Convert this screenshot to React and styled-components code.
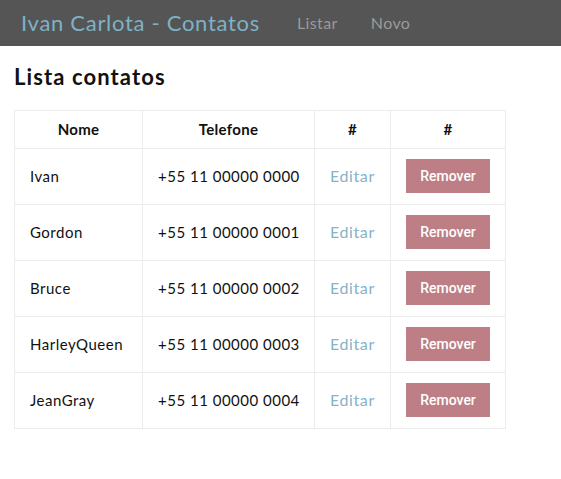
import React from "react";
import styled, { createGlobalStyle } from "styled-components";

const Global = createGlobalStyle`
  html, body { margin: 0; padding: 0; background: #fff; }
  body { font-family: "Lato", "Open Sans", sans-serif; color: #111; }
`;

const NavBar = styled.header`
  height: 46px;
  background: #555555;
  display: flex;
  align-items: center;
  padding: 0 0 2px 21px;
  box-sizing: border-box;
  gap: 37px;
`;

const Brand = styled.span`
  font-size: 22px;
  color: #7db2c6;
  letter-spacing: 0.7px;
`;

const NavLinks = styled.nav`
  display: flex;
  gap: 33px;
`;

const NavLink = styled.a`
  font-size: 16px;
  color: #9a9a9a;
  text-decoration: none;
  letter-spacing: 0.4px;
`;

const Main = styled.main`
  padding: 0 14px;
`;

const Title = styled.h1`
  font-size: 22px;
  font-weight: 700;
  margin: 18px 0 20px;
  line-height: 26px;
  letter-spacing: 1.1px;
  color: #111;
`;

const Table = styled.table`
  border-collapse: collapse;
  table-layout: fixed;
  width: 491px;
  font-size: 15px;
`;

const Th = styled.th`
  border: 1px solid #ececec;
  height: 35px;
  padding: 0 16px 2px;
  font-weight: 700;
  text-align: center;
  color: #111;
  font-size: 15px;
  letter-spacing: 0.3px;
`;

const Td = styled.td`
  border: 1px solid #ececec;
  height: 53px;
  padding: 0 15px 2px;
  color: #111;
  white-space: nowrap;
  letter-spacing: 0.5px;
`;

const EditLink = styled.a`
  color: #86b3c8;
  font-size: 16px;
  letter-spacing: 0.6px;
  text-decoration: none;
`;

const RemoveButton = styled.button`
  display: block;
  width: 84px;
  height: 34px;
  border: none;
  background: #bd7e85;
  color: #fff;
  font-family: "Roboto", "Liberation Sans", sans-serif;
  font-weight: 500;
  font-size: 14px;
  letter-spacing: 0;
  padding: 0;
  cursor: pointer;
`;

const contacts = [
  { name: "Ivan", phone: "+55 11 00000 0000" },
  { name: "Gordon", phone: "+55 11 00000 0001" },
  { name: "Bruce", phone: "+55 11 00000 0002" },
  { name: "HarleyQueen", phone: "+55 11 00000 0003" },
  { name: "JeanGray", phone: "+55 11 00000 0004" },
];

export default function App() {
  return (
    <>
      <Global />
      <NavBar>
        <Brand>Ivan Carlota - Contatos</Brand>
        <NavLinks>
          <NavLink href="#">Listar</NavLink>
          <NavLink href="#">Novo</NavLink>
        </NavLinks>
      </NavBar>
      <Main>
        <Title>Lista contatos</Title>
        <Table>
          <colgroup>
            <col style={{ width: 128 }} />
            <col style={{ width: 172 }} />
            <col style={{ width: 76 }} />
            <col style={{ width: 115 }} />
          </colgroup>
          <thead>
            <tr>
              <Th>Nome</Th>
              <Th>Telefone</Th>
              <Th>#</Th>
              <Th>#</Th>
            </tr>
          </thead>
          <tbody>
            {contacts.map((c) => (
              <tr key={c.name}>
                <Td>{c.name}</Td>
                <Td>{c.phone}</Td>
                <Td>
                  <EditLink href="#">Editar</EditLink>
                </Td>
                <Td>
                  <RemoveButton>Remover</RemoveButton>
                </Td>
              </tr>
            ))}
          </tbody>
        </Table>
      </Main>
    </>
  );
}
